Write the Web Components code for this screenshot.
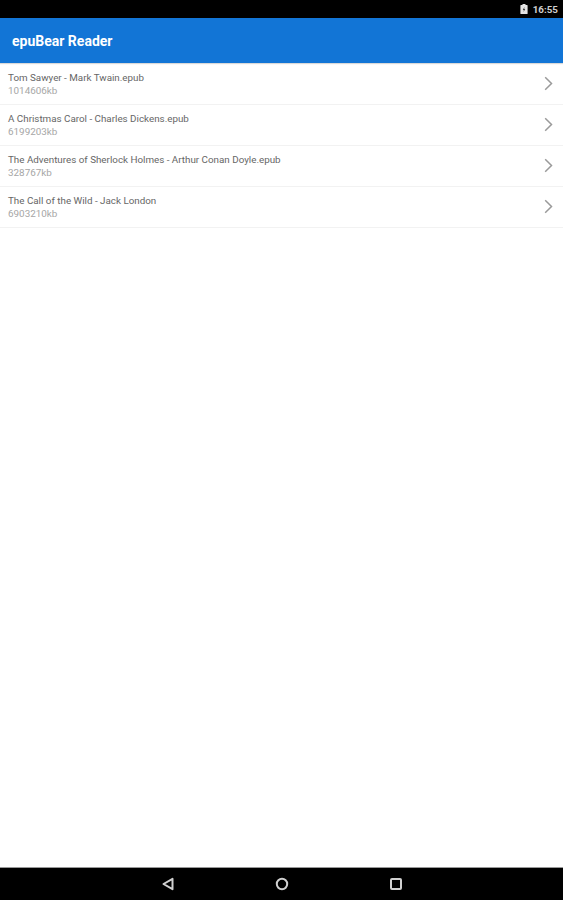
<!DOCTYPE html>
<html><head><meta charset="utf-8">
<style>
html,body{margin:0;padding:0;height:100%;background:#fff;font-family:Roboto,"Liberation Sans",sans-serif}
app-shell{height:900px}
</style></head><body>
<app-shell>
  <status-bar slot="status">16:55</status-bar>
  <app-bar slot="bar">epuBear Reader</app-bar>
  <file-row name="Tom Sawyer - Mark Twain.epub" size="1014606kb"></file-row>
  <file-row name="A Christmas Carol - Charles Dickens.epub" size="6199203kb"></file-row>
  <file-row name="The Adventures of Sherlock Holmes - Arthur Conan Doyle.epub" size="328767kb"></file-row>
  <file-row name="The Call of the Wild - Jack London" size="6903210kb"></file-row>
  <nav-bar slot="nav"></nav-bar>
</app-shell>
<script>
function def(name,html){
  customElements.define(name,class extends HTMLElement{
    connectedCallback(){
      if(this.shadowRoot)return;
      const r=this.attachShadow({mode:'open'});
      r.innerHTML=typeof html==='function'?html(this):html;
    }
  });
}
def('app-shell',`<style>:host{display:flex;flex-direction:column;width:563px;overflow:hidden}
main{flex:1;display:flex;flex-direction:column;min-height:0;padding-top:1px}</style>
<slot name="status"></slot><slot name="bar"></slot><main><slot></slot></main><slot name="nav"></slot>`);
def('status-bar',`<style>:host{display:flex;flex:none;height:18px;background:#000;color:#d0d0d0;align-items:center;justify-content:flex-end;gap:5px;padding-right:5px;font:700 9.800px Roboto,sans-serif;box-sizing:border-box}
svg{display:block}</style>
<svg width="8" height="10" viewBox="0 0 8 10"><path d="M2.500 0h3v1H7a.6.6 0 0 1 .6.6v7.800A.6.6 0 0 1 7 10H1a.6.6 0 0 1-.6-.6V1.600A.6.6 0 0 1 1 1h1.500z" fill="#e4e4e4"/><path d="M4.400 3 2.800 6h1l-.2 2 1.600-3h-1z" fill="#333"/></svg><slot></slot>`);
def('app-bar',`<style>:host{display:flex;flex:none;height:45px;background:#1275d6;color:#fff;align-items:center;padding:0 0 0 12px;box-sizing:border-box;font:700 14px Roboto,sans-serif;box-shadow:0 1px 1px rgba(0,0,0,.15);position:relative}</style><slot></slot>`);
def('file-row',h=>`<style>:host{display:flex;flex:none;height:41px;box-sizing:border-box;border-bottom:1px solid #f2f2f2;align-items:center;padding:0 10px 2px 8px;justify-content:space-between}
.t{display:flex;flex-direction:column;gap:3px;margin-top:2px}
.n{font:400 9.820px/10px Roboto,sans-serif;color:#666}
.s{font:400 9.900px/10px Roboto,sans-serif;color:#a6a6a6}
svg{display:block}</style>
<div class="t"><div class="n">${h.getAttribute('name')}</div><div class="s">${h.getAttribute('size')}</div></div>
<svg width="9" height="15" viewBox="0 0 9 15"><path d="M1.200 1.200 7.500 7.500 1.200 13.800" fill="none" stroke="#9a9a9a" stroke-width="1.500"/></svg>`);
def('nav-bar',`<style>:host{display:flex;flex:none;height:33px;background:#000;border-top:1px solid #999;box-sizing:border-box;align-items:center;justify-content:center;gap:100px}
svg{display:block}</style>
<svg width="14" height="14" viewBox="0 0 14 14"><path d="M11.500 1.800V12.200L2.500 7z" fill="none" stroke="#d0d0d0" stroke-width="2" stroke-linejoin="round"/></svg>
<svg width="14" height="14" viewBox="0 0 14 14"><circle cx="7" cy="7" r="5.200" fill="none" stroke="#d0d0d0" stroke-width="2"/></svg>
<svg width="14" height="14" viewBox="0 0 14 14"><rect x="2" y="2" width="10" height="10" rx="1" fill="none" stroke="#d0d0d0" stroke-width="2"/></svg>`);
</script>
</body></html>
